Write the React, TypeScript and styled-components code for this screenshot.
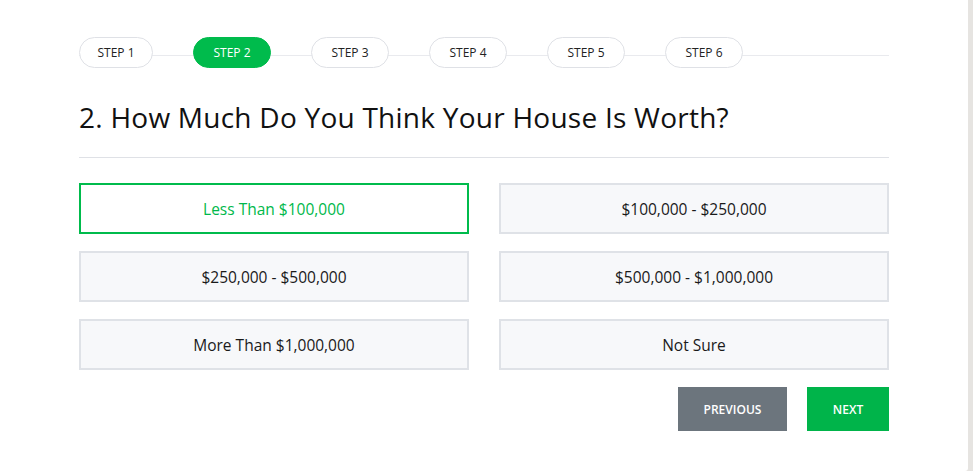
import React, { useState } from "react"
import styled, { createGlobalStyle } from "styled-components"

const GlobalStyle = createGlobalStyle`
  body {
    margin: 0;
    background: #e6e4e1;
    font-family: "Open Sans", "Liberation Sans", sans-serif;
  }
`

const steps = ["STEP 1", "STEP 2", "STEP 3", "STEP 4", "STEP 5", "STEP 6"]

const options = [
  "Less Than $100,000",
  "$100,000 - $250,000",
  "$250,000 - $500,000",
  "$500,000 - $1,000,000",
  "More Than $1,000,000",
  "Not Sure",
]

const App = () => {
  const [picked, setPicked] = useState(0)
  return (
    <>
      <GlobalStyle />
      <Card>
        <StepBar>
          {steps.map((s, i) => (
            <StepPill key={s} active={i === 1}>
              {s}
            </StepPill>
          ))}
        </StepBar>
        <Title>2. How Much Do You Think Your House Is Worth?</Title>
        <Divider />
        <Options>
          {options.map((o, i) => (
            <Option key={o} selected={i === picked} onClick={() => setPicked(i)}>
              {o}
            </Option>
          ))}
        </Options>
        <Actions>
          <NavButton>Previous</NavButton>
          <NavButton primary>Next</NavButton>
        </Actions>
      </Card>
    </>
  )
}

const Card = styled.div`
  width: 968px;
  height: 471px;
  box-sizing: border-box;
  background: #fff;
  border-bottom-right-radius: 3px;
  padding: 37px 79px 0 79px;
  display: flex;
  flex-direction: column;
`

const StepBar = styled.div`
  position: relative;
  display: flex;
  gap: 40px;
  &::before {
    content: "";
    position: absolute;
    left: 0;
    right: 0;
    top: 18px;
    height: 1px;
    background: #e9eaee;
  }
`

const StepPill = styled.div<{ active?: boolean }>`
  position: relative;
  width: 78px;
  height: 31px;
  box-sizing: border-box;
  border-radius: 16px;
  display: flex;
  align-items: center;
  justify-content: center;
  font-size: 12px;
  font-weight: 500;
  color: ${(p) => (p.active ? "#fff" : "#222")};
  background: ${(p) => (p.active ? "#00bb4c" : "#fff")};
  border: 1px solid ${(p) => (p.active ? "#00bb4c" : "#dfe1e6")};
  &:first-child {
    width: 74px;
  }
`

const Title = styled.h2`
  margin: 30px 0 0;
  font-size: 28px;
  font-weight: 400;
  letter-spacing: 0.25px;
  line-height: 38px;
  color: #111;
`

const Divider = styled.hr`
  margin: 21px 0 0;
  border: 0;
  height: 1px;
  background: #dfe1e6;
`

const Options = styled.div`
  margin-top: 25px;
  display: grid;
  grid-template-columns: 1fr 1fr;
  column-gap: 30px;
  row-gap: 17px;
`

const Option = styled.div<{ selected?: boolean }>`
  height: 51px;
  box-sizing: border-box;
  display: flex;
  align-items: center;
  justify-content: center;
  font-size: 15.5px;
  color: ${(p) => (p.selected ? "#00b84a" : "#1a1a1a")};
  background: ${(p) => (p.selected ? "#fff" : "#f7f8fa")};
  border: 2px solid ${(p) => (p.selected ? "#00bb4c" : "#dfe2e7")};
  cursor: pointer;
`

const Actions = styled.div`
  margin-top: 17px;
  display: flex;
  justify-content: flex-end;
  gap: 20px;
`

const NavButton = styled.button<{ primary?: boolean }>`
  width: ${(p) => (p.primary ? "82px" : "109px")};
  height: 44px;
  padding: 0;
  border: 0;
  font-family: inherit;
  font-size: 12px;
  font-weight: 600;
  text-transform: uppercase;
  color: #fff;
  background: ${(p) => (p.primary ? "#00b44a" : "#6c757d")};
  cursor: pointer;
`

export default App
